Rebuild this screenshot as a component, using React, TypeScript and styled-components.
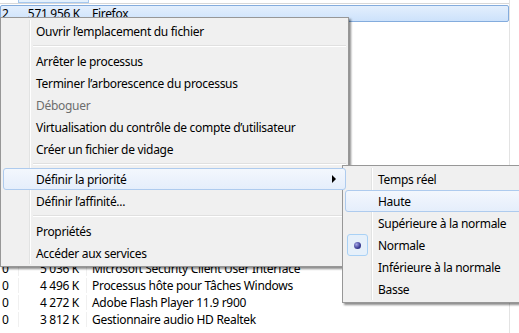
import styled, { createGlobalStyle } from "styled-components";

interface Proc {
  cpu: string;
  mem: string;
  name: string;
}

const hidden: Proc[] = Array.from({ length: 14 }, () => ({ cpu: "", mem: "", name: "" }));

const procs: Proc[] = [
  { cpu: "2", mem: "571 956 K", name: "Firefox" },
  ...hidden,
  { cpu: "0", mem: "5 036 K", name: "Microsoft Security Client User Interface" },
  { cpu: "0", mem: "4 496 K", name: "Processus hôte pour Tâches Windows" },
  { cpu: "0", mem: "4 272 K", name: "Adobe Flash Player 11.9 r900" },
  { cpu: "0", mem: "3 812 K", name: "Gestionnaire audio HD Realtek" },
];

type Entry =
  | { kind: "item"; label: string; disabled?: boolean; hot?: boolean; sub?: boolean }
  | { kind: "sep" };

const mainItems: Entry[] = [
  { kind: "item", label: "Ouvrir l’emplacement du fichier" },
  { kind: "sep" },
  { kind: "item", label: "Arrêter le processus" },
  { kind: "item", label: "Terminer l’arborescence du processus" },
  { kind: "item", label: "Déboguer", disabled: true },
  { kind: "item", label: "Virtualisation du contrôle de compte d’utilisateur" },
  { kind: "item", label: "Créer un fichier de vidage" },
  { kind: "sep" },
  { kind: "item", label: "Définir la priorité", hot: true, sub: true },
  { kind: "item", label: "Définir l’affinité..." },
  { kind: "sep" },
  { kind: "item", label: "Propriétés" },
  { kind: "item", label: "Accéder aux services" },
];

const priorities = [
  "Temps réel",
  "Haute",
  "Supérieure à la normale",
  "Normale",
  "Inférieure à la normale",
  "Basse",
];

const GlobalStyle = createGlobalStyle`
  html, body {
    margin: 0;
    padding: 0;
    overflow: hidden;
    background: #fff;
  }
  body {
    font-family: "Noto Sans", "Open Sans", sans-serif;
    font-size: 12px;
    letter-spacing: -0.3px;
    color: #000;
  }
`;

const Page = styled.div`
  position: relative;
  width: 519px;
  height: 333px;
  overflow: hidden;
  background: #fff;
`;

const Grid = styled.div`
  display: flex;
  flex-direction: column;
  width: 509px;
  height: 333px;
  border-right: 1px solid #e3e3e3;
`;

const TopStrip = styled.div`
  height: 3px;
  border-bottom: 1px solid #d8d8d8;
  display: flex;
  margin-bottom: 1px;
`;

const TopCell = styled.div<{ $w: number; $hot?: boolean }>`
  width: ${(p) => p.$w}px;
  background: ${(p) => (p.$hot ? "#e4f0fc" : "transparent")};
  border: ${(p) => (p.$hot ? "1px solid #a5c8ef" : "none")};
  border-top: none;
`;

const Row = styled.div<{ $selected?: boolean }>`
  display: grid;
  grid-template-columns: 18px 68px 1fr;
  height: 17px;
  line-height: 15px;
  box-sizing: border-box;
  border: 1px solid ${(p) => (p.$selected ? "#84acdd" : "transparent")};
  border-radius: ${(p) => (p.$selected ? "2px" : "0")};
  background: ${(p) =>
    p.$selected ? "linear-gradient(#e3effd, #cde2fb)" : "transparent"};
  white-space: nowrap;
`;

const Cell = styled.div<{ $right?: boolean; $line?: boolean }>`
  padding: ${(p) => (p.$right ? "0 7px 0 0" : "0 0 0 1px")};
  text-align: ${(p) => (p.$right ? "right" : "left")};
  border-right: ${(p) => (p.$line ? "1px solid #f0f0f0" : "none")};
  overflow: hidden;
`;

const NameCell = styled.div`
  padding-left: 5px;
`;

const Menu = styled.div<{ $left: number; $top: number; $width: number }>`
  position: absolute;
  left: ${(p) => p.$left}px;
  top: ${(p) => p.$top}px;
  width: ${(p) => p.$width}px;
  box-sizing: border-box;
  padding: 2px;
  background: #f0f0f0;
  border: 1px solid #979797;
  box-shadow: 2px 2px 2px rgba(0, 0, 0, 0.45);
  display: flex;
  flex-direction: column;
  &::before {
    content: "";
    position: absolute;
    top: 2px;
    bottom: 2px;
    left: 28px;
    width: 1px;
    background: #e2e3e3;
    border-right: 1px solid #ffffff;
  }
`;

const Item = styled.div<{ $disabled?: boolean; $hot?: boolean }>`
  position: relative;
  height: 22px;
  box-sizing: border-box;
  display: flex;
  align-items: center;
  padding-left: 32px;
  color: ${(p) => (p.$disabled ? "#6d6d6d" : "#000")};
  border: 1px solid ${(p) => (p.$hot ? "#aecbee" : "transparent")};
  border-radius: 3px;
  background: ${(p) =>
    p.$hot ? "linear-gradient(#f3f7fd, #e5eefb)" : "transparent"};
  white-space: nowrap;
  z-index: 1;
`;

const Separator = styled.div`
  height: 8px;
  display: flex;
  align-items: center;
  padding-left: 30px;
  &::after {
    content: "";
    flex: 1;
    height: 1px;
    background: #e0e0e0;
    border-bottom: 1px solid #ffffff;
  }
`;

const Arrow = styled.span`
  position: absolute;
  right: 9px;
  top: 6px;
  width: 0;
  height: 0;
  border-top: 4px solid transparent;
  border-bottom: 4px solid transparent;
  border-left: 4px solid #000;
`;

const RadioBox = styled.span`
  position: absolute;
  left: 1px;
  top: -1px;
  width: 21px;
  height: 22px;
  box-sizing: border-box;
  border: 1px solid #a9d1f5;
  border-radius: 3px;
  background: #e6f0fa;
  display: flex;
  align-items: center;
  justify-content: center;
`;

const Dot = styled.span`
  width: 7px;
  height: 7px;
  border-radius: 50%;
  background: radial-gradient(circle at 35% 35%, #a7a9e8, #3a3c94 60%, #23256a);
`;

const App = () => {
  return (
    <Page>
      <GlobalStyle />
      <Grid>
        <TopStrip>
          <TopCell $w={18} />
          <TopCell $w={69} $hot />
        </TopStrip>
        {procs.map((p, i) => (
          <Row key={i} $selected={i === 0}>
            <Cell $line={i !== 0}>{p.cpu}</Cell>
            <Cell $right $line={i !== 0}>{p.mem}</Cell>
            <NameCell>{p.name}</NameCell>
          </Row>
        ))}
      </Grid>

      <Menu $left={0} $top={17} $width={349}>
        {mainItems.map((e, i) =>
          e.kind === "sep" ? (
            <Separator key={i} />
          ) : (
            <Item key={i} $disabled={e.disabled} $hot={e.hot}>
              {e.label}
              {e.sub && <Arrow />}
            </Item>
          )
        )}
      </Menu>

      <Menu $left={342} $top={165} $width={185}>
        {priorities.map((label) => (
          <Item key={label} $hot={label === "Haute"}>
            {label === "Normale" && (
              <RadioBox>
                <Dot />
              </RadioBox>
            )}
            {label}
          </Item>
        ))}
      </Menu>
    </Page>
  );
};

export default App;
